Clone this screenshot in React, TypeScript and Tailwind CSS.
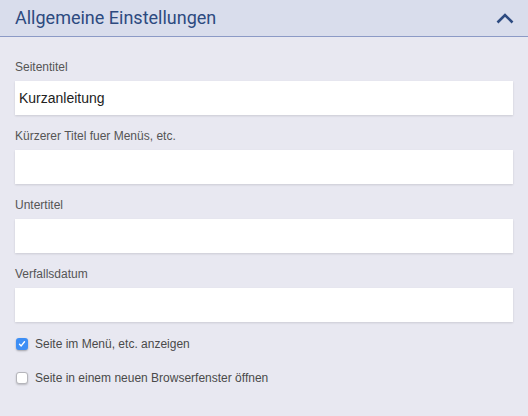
import React from 'react';

const fields = [
  { label: 'Seitentitel', value: 'Kurzanleitung' },
  { label: 'Kürzerer Titel fuer Menüs, etc.', value: '' },
  { label: 'Untertitel', value: '' },
  { label: 'Verfallsdatum', value: '' },
];

const Check: React.FC<{ checked: boolean; label: string }> = ({ checked, label }) => (
  <label className="flex items-center gap-[7px] h-[12px]">
    {checked ? (
      <span className="w-[12px] h-[12px] rounded-[3px] bg-[#3d8ef5] flex items-center justify-center shadow-[0_1px_2px_rgba(0,0,0,0.3)]">
        <svg width="8" height="8" viewBox="0 0 8 8" fill="none">
          <path d="M1.5 4.2 L3.2 5.9 L6.5 1.8" stroke="white" strokeWidth="1.4" strokeLinecap="round" strokeLinejoin="round" />
        </svg>
      </span>
    ) : (
      <span className="w-[12px] h-[12px] rounded-[3px] bg-white border border-[#b5b5bb] shadow-[0_1px_2px_rgba(0,0,0,0.2)]" />
    )}
    <span className="text-[12px] text-[#4a4a4a]">{label}</span>
  </label>
);

export default function App() {
  return (
    <div className="w-[528px] h-[416px] bg-[#e8e8f1] font-['Liberation_Sans',Arial,sans-serif]">
      <div className="h-[37px] bg-[#d9ddec] border-b border-[#8c9ac6] flex items-center justify-between pl-[15px] pr-[14px]">
        <h2 className="text-[18px] text-[#2d4a80] font-['Roboto',sans-serif] leading-none pb-[1px]">
          Allgemeine Einstellungen
        </h2>
        <svg width="18" height="11" viewBox="0 0 18 11" fill="none">
          <path d="M1.5 9.5 L9 2 L16.5 9.5" stroke="#2d4a80" strokeWidth="2.6" />
        </svg>
      </div>
      <div className="pl-[15px] pr-[15px] pt-[23px] flex flex-col gap-[14px]">
        {fields.map((f) => (
          <div key={f.label} className="flex flex-col gap-[7px]">
            <div className="text-[12px] leading-[14px] text-[#555]">{f.label}</div>
            <div className="h-[34px] bg-white shadow-[0_1px_2px_rgba(0,0,0,0.12)] flex items-center px-[4px] text-[14px] text-[#222]">
              {f.value}
            </div>
          </div>
        ))}
        <div className="flex flex-col gap-[22px] pt-[2px] pl-[1px]">
          <Check checked label="Seite im Menü, etc. anzeigen" />
          <Check checked={false} label="Seite in einem neuen Browserfenster öffnen" />
        </div>
      </div>
    </div>
  );
}
